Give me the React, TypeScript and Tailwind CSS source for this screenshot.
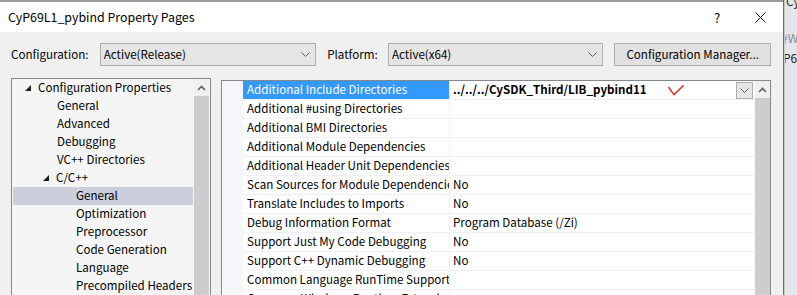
import React from "react";

const font = { fontFamily: '"Noto Sans CJK KR", "Noto Sans", sans-serif' };

const tree: { label: string; indent: string; arrow?: boolean; selected?: boolean }[] = [
  { label: "Configuration Properties", indent: "pl-[12px]", arrow: true },
  { label: "General", indent: "pl-[44px]" },
  { label: "Advanced", indent: "pl-[44px]" },
  { label: "Debugging", indent: "pl-[44px]" },
  { label: "VC++ Directories", indent: "pl-[44px]" },
  { label: "C/C++", indent: "pl-[30px]", arrow: true },
  { label: "General", indent: "pl-[63px]", selected: true },
  { label: "Optimization", indent: "pl-[63px]" },
  { label: "Preprocessor", indent: "pl-[63px]" },
  { label: "Code Generation", indent: "pl-[63px]" },
  { label: "Language", indent: "pl-[63px]" },
  { label: "Precompiled Headers", indent: "pl-[63px]" },
];

const props: [string, string][] = [
  ["Additional Include Directories", "../../../CySDK_Third/LIB_pybind11"],
  ["Additional #using Directories", ""],
  ["Additional BMI Directories", ""],
  ["Additional Module Dependencies", ""],
  ["Additional Header Unit Dependencies", ""],
  ["Scan Sources for Module Dependencies", "No"],
  ["Translate Includes to Imports", "No"],
  ["Debug Information Format", "Program Database (/Zi)"],
  ["Support Just My Code Debugging", "No"],
  ["Support C++ Dynamic Debugging", "No"],
  ["Common Language RunTime Support", ""],
  ["Consume Windows Runtime Extension", ""],
];

function Chevron({ className = "" }: { className?: string }) {
  return (
    <svg width="9" height="6" viewBox="0 0 9 6" className={className}>
      <path d="M0.5 0.5 L4.5 4.5 L8.5 0.5" fill="none" stroke="#606060" strokeWidth="1" />
    </svg>
  );
}

function UpArrow() {
  return (
    <svg width="9" height="6" viewBox="0 0 9 6">
      <path d="M1 5 L4.5 1.5 L8 5" fill="none" stroke="#606060" strokeWidth="1.6" />
    </svg>
  );
}

function Scrollbar() {
  return (
    <div className="w-[15px] shrink-0 flex flex-col bg-[#f0f0f0]">
      <div className="h-[17px] shrink-0 flex items-center justify-center">
        <UpArrow />
      </div>
      <div className="flex-1 bg-[#cdcdcd]" />
    </div>
  );
}

function Select({ value, width }: { value: string; width: string }) {
  return (
    <div className={`${width} h-[23px] border border-[#adadad] bg-[#e5e5e5] flex items-center pl-[3px] pr-[5px] text-black`}>
      <span className="flex-1">{value}</span>
      <Chevron />
    </div>
  );
}

export default function App() {
  return (
    <div className="w-[797px] h-[295px] overflow-hidden flex bg-[#e4e6ec]" style={font}>
      <div className="w-[784px] shrink-0 flex flex-col border-r-[1px] border-[#6d6d6d]">
        <div className="h-[3px] shrink-0 border-t-2 border-[#9a9a9a] bg-white" />
        {/* title bar */}
        <div className="h-[29px] shrink-0 bg-white flex items-center pl-[8px] text-[12.4px] text-black">
          <span className="flex-1">CyP69L1_pybind Property Pages</span>
          <span className="w-[16px] text-center text-[13px] mr-[30px]">?</span>
          <svg width="11" height="11" viewBox="0 0 11 11" className="mr-[17px]">
            <path d="M0.5 0.5 L10.5 10.5 M10.5 0.5 L0.5 10.5" stroke="#111" strokeWidth="1" />
          </svg>
        </div>

        <div className="flex-1 min-h-0 bg-[#f0f0f0] flex flex-col pl-[11px] pr-[12px] pt-[11px] text-[11.6px]">
          {/* configuration row */}
          <div className="flex shrink-0 items-center h-[23px] text-black">
            <span className="w-[89px]">Configuration:</span>
            <Select value="Active(Release)" width="w-[217px]" />
            <span className="ml-[11px] w-[61px]">Platform:</span>
            <Select value="Active(x64)" width="w-[216px]" />
            <div className="ml-[11px] w-[157px] h-[23px] border border-[#adadad] bg-[#e1e1e1] flex items-center justify-center">
              Configuration Manager...
            </div>
          </div>

          <div className="flex flex-1 mt-[12px] gap-[10px] min-h-0 overflow-hidden">
            {/* tree */}
            <div className="w-[200px] border border-[#828790] border-b-0 bg-[#f5f5f5] flex text-black">
              <div className="flex-1 flex flex-col pl-[1px] overflow-hidden">
                {tree.map((t, i) => (
                  <div
                    key={i}
                    className={`h-[18px] shrink-0 flex items-center ${t.indent} ${t.selected ? "bg-[#cccedb]" : ""}`}
                  >
                    {t.arrow && (
                      <svg width="6" height="6" viewBox="0 0 6 6" className="mr-[7px]">
                        <path d="M6 0 L6 6 L0 6 Z" fill="#1e1e1e" />
                      </svg>
                    )}
                    <span className="whitespace-nowrap">{t.label}</span>
                  </div>
                ))}
              </div>
              <div className="ml-[1px] mr-[1px] flex">
                <Scrollbar />
              </div>
            </div>

            {/* property grid */}
            <div className="flex-1 mt-[2px] border border-[#828790] border-b-0 bg-[#f5f7fb] flex text-black">
              <div className="w-[21px] shrink-0" />
              <div className="flex-1 flex flex-col bg-white overflow-hidden">
                {props.map(([name, value], i) => (
                  <div key={i} className="h-[19px] shrink-0 flex border-b border-[#f0f0f4]">
                    <div
                      className={`w-[207px] shrink-0 pl-[4px] flex items-center overflow-hidden whitespace-nowrap border-r border-[#f0f0f4] ${
                        i === 0 ? "bg-[#3399ff] text-white" : ""
                      }`}
                    >
                      {name}
                    </div>
                    <div className="flex-1 flex items-center pl-[3px] relative">
                      {i === 0 ? (
                        <>
                          <span className="font-bold">{value}</span>
                          <svg width="16" height="11" viewBox="0 0 16 11" className="ml-[21px]">
                            <path d="M0.8 2.5 L6 9.8 L15.2 0.8" fill="none" stroke="#ee1c1c" strokeWidth="1.4" strokeLinecap="round" />
                          </svg>
                          <div className="absolute right-[1px] top-[1px] w-[17px] h-[17px] border border-[#adadad] bg-[#e5e5e5] flex items-center justify-center">
                            <Chevron />
                          </div>
                        </>
                      ) : (
                        <span>{value}</span>
                      )}
                    </div>
                  </div>
                ))}
              </div>
              <div className="ml-[1px] flex">
                <Scrollbar />
              </div>
            </div>
          </div>
        </div>
      </div>

      {/* background window peeking at the right */}
      <div className="flex-1 relative overflow-hidden border-l border-[#c8c8c8] text-[12px]">
        <span className="absolute left-[1px] top-[-8px] text-[#333] whitespace-nowrap">CyP69</span>
        <span className="absolute left-[-4px] top-[29px] text-[#8a8a8a] whitespace-nowrap">#W</span>
        <span className="absolute left-[-2px] top-[49px] text-[#222] whitespace-nowrap">P69</span>
      </div>
    </div>
  );
}
